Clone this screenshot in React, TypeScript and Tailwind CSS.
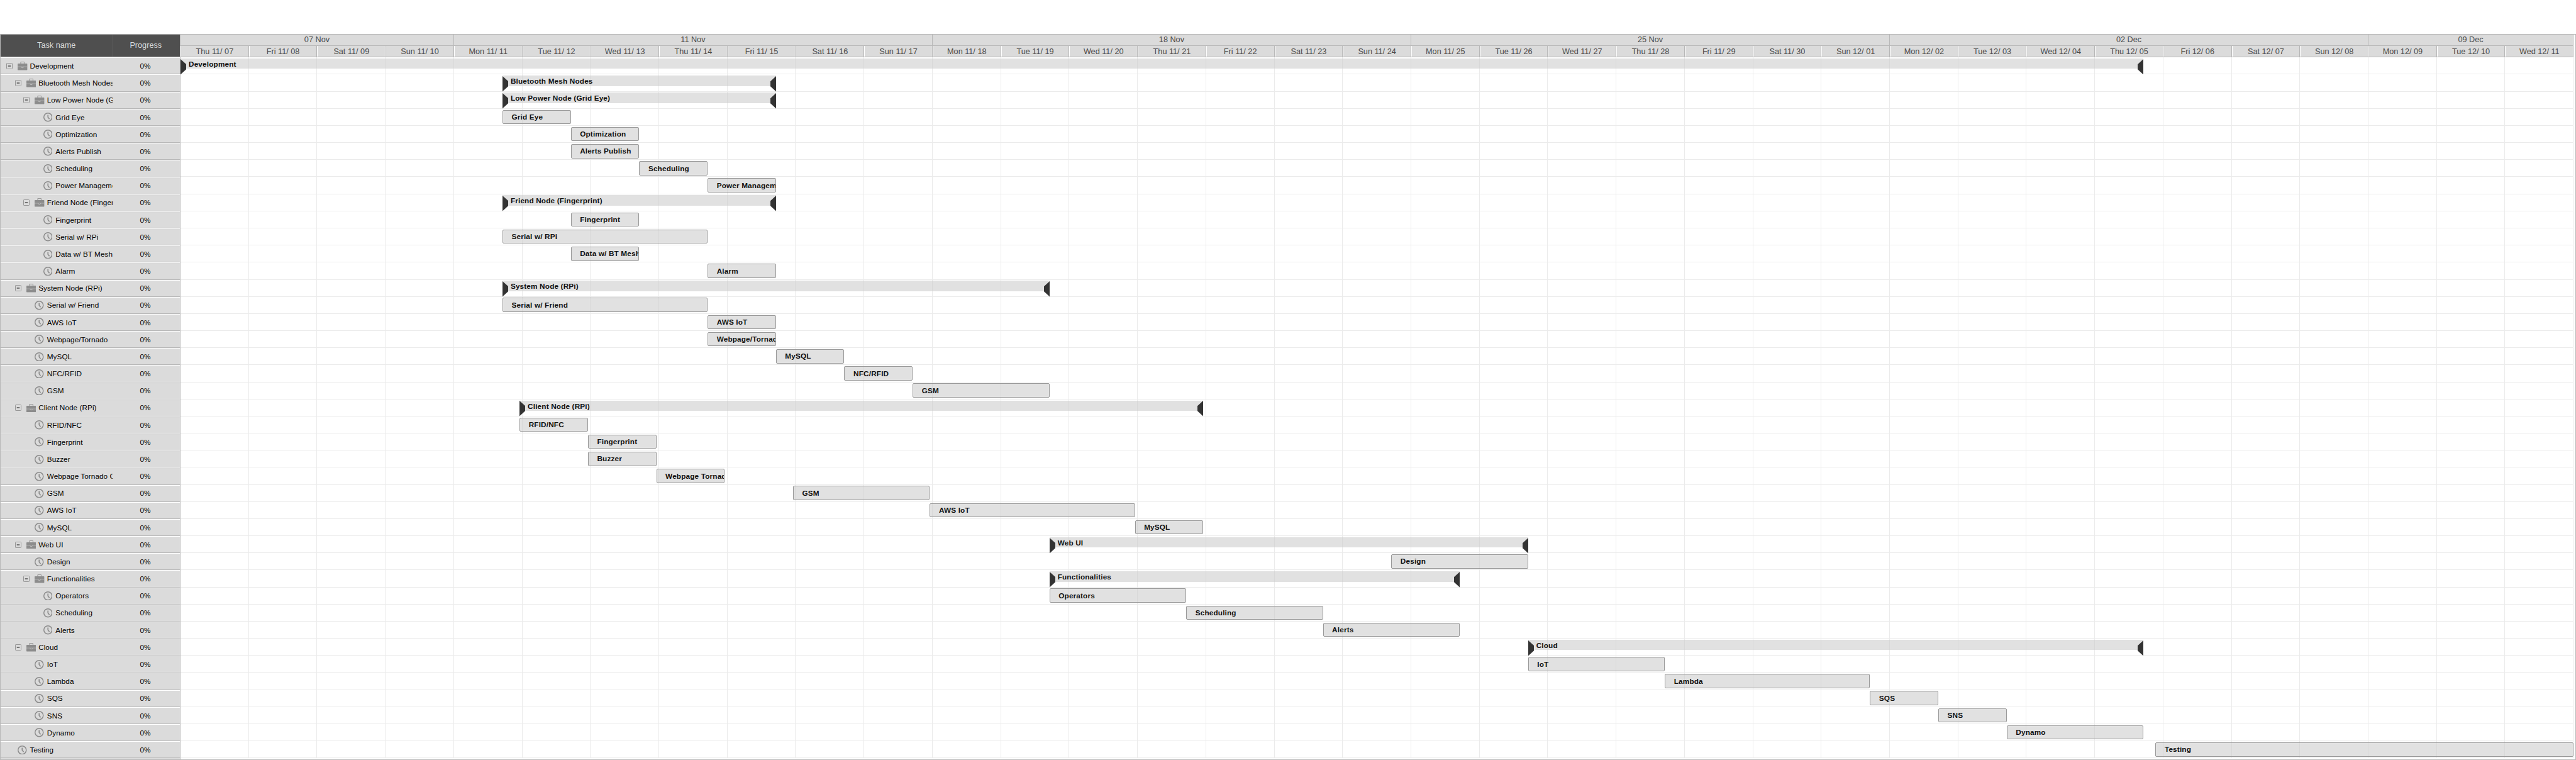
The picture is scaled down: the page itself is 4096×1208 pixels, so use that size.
const K = 4096 / 4521;
const u = (n: number) => `${n * K}px`;

type Row = [name: string, depth: number, group: boolean, start: number, days: number];

// Bars start at 17:00 or 23:00; positions are in days from the left edge.
const S = 17 / 24;
const Q = 23 / 24;

const rows: Row[] = [
  ["Development", 0, true, 0, 28 + S],
  ["Bluetooth Mesh Nodes", 1, true, 4 + S, 4],
  ["Low Power Node (Grid Eye)", 2, true, 4 + S, 4],
  ["Grid Eye", 3, false, 4 + S, 1],
  ["Optimization", 3, false, 5 + S, 1],
  ["Alerts Publish", 3, false, 5 + S, 1],
  ["Scheduling", 3, false, 6 + S, 1],
  ["Power Management", 3, false, 7 + S, 1],
  ["Friend Node (Fingerprint)", 2, true, 4 + S, 4],
  ["Fingerprint", 3, false, 5 + S, 1],
  ["Serial w/ RPi", 3, false, 4 + S, 3],
  ["Data w/ BT Mesh", 3, false, 5 + S, 1],
  ["Alarm", 3, false, 7 + S, 1],
  ["System Node (RPi)", 1, true, 4 + S, 8],
  ["Serial w/ Friend", 2, false, 4 + S, 3],
  ["AWS IoT", 2, false, 7 + S, 1],
  ["Webpage/Tornado", 2, false, 7 + S, 1],
  ["MySQL", 2, false, 8 + S, 1],
  ["NFC/RFID", 2, false, 9 + S, 1],
  ["GSM", 2, false, 10 + S, 2],
  ["Client Node (RPi)", 1, true, 4 + Q, 10],
  ["RFID/NFC", 2, false, 4 + Q, 1],
  ["Fingerprint", 2, false, 5 + Q, 1],
  ["Buzzer", 2, false, 5 + Q, 1],
  ["Webpage Tornado Conn", 2, false, 6 + Q, 1],
  ["GSM", 2, false, 8 + Q, 2],
  ["AWS IoT", 2, false, 10 + Q, 3],
  ["MySQL", 2, false, 13 + Q, 1],
  ["Web UI", 1, true, 12 + S, 7],
  ["Design", 2, false, 17 + S, 2],
  ["Functionalities", 2, true, 12 + S, 6],
  ["Operators", 3, false, 12 + S, 2],
  ["Scheduling", 3, false, 14 + S, 2],
  ["Alerts", 3, false, 16 + S, 2],
  ["Cloud", 1, true, 19 + S, 9],
  ["IoT", 2, false, 19 + S, 2],
  ["Lambda", 2, false, 21 + S, 3],
  ["SQS", 2, false, 24 + S, 1],
  ["SNS", 2, false, 25 + S, 1],
  ["Dynamo", 2, false, 26 + S, 2],
  ["Testing", 0, false, 28.885, 6.115],
];

const weekdays = ["Thu", "Fri", "Sat", "Sun", "Mon", "Tue", "Wed"];
const days = Array.from({ length: 35 }, (_, i) => {
  const n = 7 + i;
  const month = n > 30 ? 12 : 11;
  const date = n > 30 ? n - 30 : n;
  return `${weekdays[i % 7]} ${month}/ ${String(date).padStart(2, "0")}`;
});
const weeks: [string, number][] = [
  ["07 Nov", 4],
  ["11 Nov", 7],
  ["18 Nov", 7],
  ["25 Nov", 7],
  ["02 Dec", 7],
  ["09 Dec", 3],
];

function Toggle() {
  return (
    <svg viewBox="0 0 11 11" className="h-[9.97px] w-[9.97px] shrink-0">
      <rect x=".5" y=".5" width="10" height="10" rx="1" fill="none" stroke="#8d8d8d" />
      <path d="M3 5.5h5" stroke="#111" strokeWidth="1.1" />
    </svg>
  );
}

function Briefcase() {
  return (
    <svg viewBox="0 0 17 15" className="h-[13.59px] w-[15.4px] shrink-0" fill="#8c8c8c">
      <path d="M5.5 4V.5h6V4" fill="none" stroke="#8c8c8c" />
      <rect y="3.4" width="17" height="11.6" rx=".8" />
      <path d="M0 8.9h17" stroke="#bdbdbd" strokeWidth=".8" />
      <path d="M6.5 9q0 1.7 2 1.7t2-1.7" fill="#8c8c8c" stroke="#d4d4d4" strokeWidth=".8" />
    </svg>
  );
}

function Clock() {
  return (
    <svg viewBox="0 0 16 16" className="h-[14.5px] w-[14.5px] shrink-0" fill="none" stroke="#8c8c8c">
      <circle cx="8" cy="8" r="7.2" strokeWidth="1.6" />
      <path d="M8 3.8V8l2.6 3.2" strokeWidth="1.8" />
    </svg>
  );
}

function TaskRow({ row }: { row: Row }) {
  const [name, depth, group] = row;
  return (
    <div className="flex h-[27.18px] border-b border-[#b8b8b8] bg-[#dbdbdb] text-black">
      <div
        className="flex w-[177.8px] shrink-0 items-center overflow-hidden whitespace-pre border-t border-white"
        style={{ paddingLeft: u(10 + depth * 15) }}
      >
        <span className="flex w-[18.12px] shrink-0">{group && <Toggle />}</span>
        <span className="flex w-[19.4px] shrink-0">{group ? <Briefcase /> : <Clock />}</span>
        <span className="tracking-[0.05px]">{name}</span>
      </div>
      <div className="flex flex-1 items-center justify-center border-t border-white pr-[3px]">0%</div>
    </div>
  );
}

function Bar({ row }: { row: Row }) {
  const [name, , group, start, len] = row;
  const box = { left: u(start * 120), width: u(len * 120) };
  if (group) {
    return (
      <div className="absolute top-[1.8px] h-[25.4px]" style={box}>
        <div className="h-[16.3px] bg-[#c8c8c8]/55" />
        <svg viewBox="0 0 10 27" preserveAspectRatio="none" className="absolute left-0 top-[0.9px] h-[24.46px] w-[9.06px]" fill="#333">
          <path d="M0 0l10 9v9L0 27z" />
        </svg>
        <svg viewBox="0 0 10 27" preserveAspectRatio="none" className="absolute right-0 top-[0.9px] h-[24.46px] w-[9.06px]" fill="#333">
          <path d="M10 0L0 9v9l10 9z" />
        </svg>
        <span className="absolute left-[13px] top-0 whitespace-pre font-bold leading-[17px] tracking-[0.16px]">{name}</span>
      </div>
    );
  }
  return (
    <div
      className="absolute top-[1.8px] flex h-[22.6px] items-center overflow-hidden whitespace-pre rounded-[2px] border border-[#999] bg-[#c8c8c8]/55 pl-[13.6px] font-bold tracking-[0.16px]"
      style={box}
    >
      {name}
    </div>
  );
}

export default function App() {
  return (
    <div className="h-[1208px] w-[4096px] overflow-hidden bg-white pt-[54px] font-['Liberation_Sans',sans-serif] text-[11.78px] leading-none text-[#111]">
      <div className="flex h-[1153.5px] border border-[#b8b8b8]">
        <div className="w-[286px] shrink-0 border-r border-[#b8b8b8] bg-[#dbdbdb]">
          <div className="flex h-[36.3px] border-b border-[#b8b8b8] bg-[#4f4f4f] text-[12.68px] text-[#dbdbdb]">
            <div className="flex w-[178.5px] items-center justify-center border-r border-[#5e5e5e]">Task name</div>
            <div className="flex flex-1 items-center justify-center pr-0.5">Progress</div>
          </div>
          {rows.map((r, i) => (
            <TaskRow key={i} row={r} />
          ))}
        </div>
        <div className="w-[3805.2px] shrink-0">
          <div className="flex h-[18.2px] border-b border-[#b8b8b8] bg-[#dbdbdb] text-[12.68px] text-[#4a4a4a]">
            {weeks.map(([label, n]) => (
              <div key={label} className="flex items-center justify-center border-r border-[#b8b8b8]" style={{ width: u(n * 120) }}>
                {label}
              </div>
            ))}
          </div>
          <div className="flex h-[18.1px] border-b border-[#b8b8b8] bg-[#dbdbdb] text-[12.68px] text-[#4a4a4a]">
            {days.map((d) => (
              <div key={d} className="flex w-[108.72px] items-center justify-center whitespace-pre border-l border-r border-l-white border-r-[#b8b8b8] pt-px">
                {d}
              </div>
            ))}
          </div>
          {rows.map((r, i) => (
            <div key={i} className="relative flex h-[27.18px] border-b border-[#ebebeb]">
              {days.map((d) => (
                <div key={d} className="w-[108.72px] border-r border-[#ebebeb]" />
              ))}
              <Bar row={r} />
            </div>
          ))}
        </div>
      </div>
    </div>
  );
}
